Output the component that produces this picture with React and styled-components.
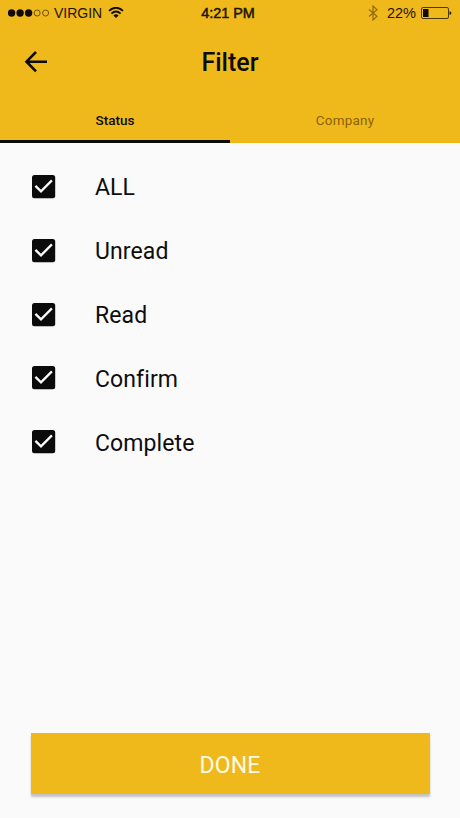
import { useState } from "react";
import styled, { createGlobalStyle } from "styled-components";

const GlobalStyle = createGlobalStyle`
  * {
    box-sizing: border-box;
  }

  body {
    margin: 0;
    background-color: #fafafa;
    font-family: Roboto, "Liberation Sans", sans-serif;
  }

  button {
    border: 0;
    padding: 0;
    background: none;
    font-family: inherit;
    cursor: pointer;
  }

  svg {
    display: block;
  }
`;

const Screen = styled.div`
  display: flex;
  flex-direction: column;
  height: 818px;
  overflow: hidden;
  background-color: #fafafa;
`;

const Header = styled.header`
  display: flex;
  flex-direction: column;
  height: 143px;
  background-color: #f0b91b;
`;

const StatusBar = styled.div`
  display: grid;
  grid-template-columns: 1fr auto 1fr;
  align-items: center;
  height: 26px;
  padding: 0 8px;
  color: #1c1503;
  font-family: "Liberation Sans", sans-serif;
  font-size: 14px;
  line-height: 26px;
`;

const Carrier = styled.div`
  display: flex;
  align-items: center;

  span {
    margin: 0 6px 0 5px;
  }
`;

const Clock = styled.div`
  padding-right: 4px;
  font-size: 14.4px;
  -webkit-text-stroke: 0.5px #1c1503;
`;

const Battery = styled.div`
  display: flex;
  align-items: center;
  justify-content: flex-end;

  span {
    margin: 0 5px 0 9px;
    font-size: 14.5px;
  }
`;

const TitleBar = styled.div`
  display: grid;
  grid-template-columns: 72px 1fr 72px;
  align-items: center;
  height: 71px;
`;

const BackButton = styled.button`
  justify-self: center;
`;

const Title = styled.h1`
  margin: 2px 0 0;
  color: #0d0b05;
  font-size: 25px;
  font-weight: 500;
  text-align: center;
`;

const Tabs = styled.nav`
  display: grid;
  grid-template-columns: 1fr 1fr;
  flex: 1;
`;

const Tab = styled.button`
  padding-top: 2px;
  border-bottom: 3px solid ${({ $active }) => ($active ? "#0d0b05" : "transparent")};
  color: ${({ $active }) => ($active ? "#0d0b05" : "#8b6209")};
  font-size: 13.5px;
  font-weight: ${({ $active }) => ($active ? 500 : 400)};
  letter-spacing: ${({ $active }) => ($active ? "0" : "0.2px")};
`;

const Options = styled.main`
  flex: 1;
  padding-top: 11.6px;
`;

const Option = styled.button`
  display: flex;
  align-items: center;
  gap: 36px;
  width: 100%;
  height: 63.8px;
  padding-left: 28px;
  color: #0d0d0d;
  font-size: 23px;
  font-variant-ligatures: none;
  letter-spacing: 0.1px;
  text-align: left;
`;

const OptionLabel = styled.span`
  padding-top: 3px;
`;

const Footer = styled.footer`
  padding: 0 30.5px 24px;
`;

const DoneButton = styled.button`
  width: 100%;
  height: 61px;
  padding-top: 3px;
  background-color: #f0b91b;
  box-shadow: 0 3px 2px rgba(0, 0, 0, 0.22);
  color: #fffbe6;
  font-size: 23px;
  letter-spacing: 0.2px;
`;

const SignalDots = () => (
  <svg width="41" height="9" viewBox="0 0 41 9">
    {[0, 1, 2, 3, 4].map((i) => (
      <circle
        key={i}
        cx={3.6 + i * 8.5}
        cy="4"
        r={i < 3 ? 3.7 : 3}
        fill={i < 3 ? "#110c00" : "none"}
        stroke={i < 3 ? "none" : "#5c460a"}
        strokeWidth="0.9"
      />
    ))}
  </svg>
);

const WifiIcon = () => (
  <svg width="16" height="12" viewBox="0 0 16 12" fill="none" stroke="#110c00" strokeWidth="1.9">
    <path d="M1 3.9Q8-2.3 15 3.9" />
    <path d="M3.4 6.6Q8 2.6 12.6 6.6" />
    <path d="M5.4 8.4Q8 6.1 10.6 8.4L8 11Z" fill="#110c00" stroke="none" />
  </svg>
);

const BluetoothIcon = () => (
  <svg width="10" height="16" viewBox="0 0 10 16" fill="none" stroke="#8f6b10" strokeWidth="1.2">
    <path d="M1 4.5L9 11.3L5 15V1L9 4.7L1 11.5" />
  </svg>
);

const BatteryIcon = () => (
  <svg width="31" height="13" viewBox="0 0 31 13">
    <rect x="0.5" y="0.5" width="27" height="11" rx="1.5" fill="none" stroke="#4c3906" />
    <rect x="2" y="2" width="5.5" height="8" fill="#110c00" />
    <path d="M28.5 3.9Q30.5 4.6 30.5 6T28.5 8.1Z" fill="#2c2103" />
  </svg>
);

const BackIcon = () => (
  <svg width="24" height="24" viewBox="0 0 24 24" fill="none" stroke="#0d0b05" strokeWidth="2.6">
    <path d="M23 11.7H3M12 2L2.5 11.7L12 21.4" />
  </svg>
);

const CheckIcon = ({ checked }) => (
  <svg width="31" height="31" viewBox="0 0 31 31" fill="none">
    {checked ? (
      <>
        <rect x="4" y="4" width="23.2" height="23.2" rx="2.5" fill="#0b0b0b" />
        <path d="M7.4 14.9L13 20.4L23.9 9.4" stroke="#fafafa" strokeWidth="2.3" />
      </>
    ) : (
      <rect x="5.2" y="5.2" width="20.8" height="20.8" rx="1.5" stroke="#0b0b0b" strokeWidth="2.4" />
    )}
  </svg>
);

const tabs = ["Status", "Company"];
const statuses = ["ALL", "Unread", "Read", "Confirm", "Complete"];

function App() {
  const [activeTab, setActiveTab] = useState("Status");
  const [selected, setSelected] = useState(statuses);

  const toggle = (name) => {
    setSelected((prev) =>
      prev.includes(name) ? prev.filter((item) => item !== name) : [...prev, name]
    );
  };

  return (
    <>
      <GlobalStyle />
      <Screen>
        <Header>
          <StatusBar>
            <Carrier>
              <SignalDots />
              <span>VIRGIN</span>
              <WifiIcon />
            </Carrier>
            <Clock>4:21 PM</Clock>
            <Battery>
              <BluetoothIcon />
              <span>22%</span>
              <BatteryIcon />
            </Battery>
          </StatusBar>
          <TitleBar>
            <BackButton aria-label="Back">
              <BackIcon />
            </BackButton>
            <Title>Filter</Title>
          </TitleBar>
          <Tabs>
            {tabs.map((tab) => (
              <Tab key={tab} $active={tab === activeTab} onClick={() => setActiveTab(tab)}>
                {tab}
              </Tab>
            ))}
          </Tabs>
        </Header>
        <Options>
          {statuses.map((name) => (
            <Option
              key={name}
              role="checkbox"
              aria-checked={selected.includes(name)}
              onClick={() => toggle(name)}
            >
              <CheckIcon checked={selected.includes(name)} />
              <OptionLabel>{name}</OptionLabel>
            </Option>
          ))}
        </Options>
        <Footer>
          <DoneButton>DONE</DoneButton>
        </Footer>
      </Screen>
    </>
  );
}

export default App;
